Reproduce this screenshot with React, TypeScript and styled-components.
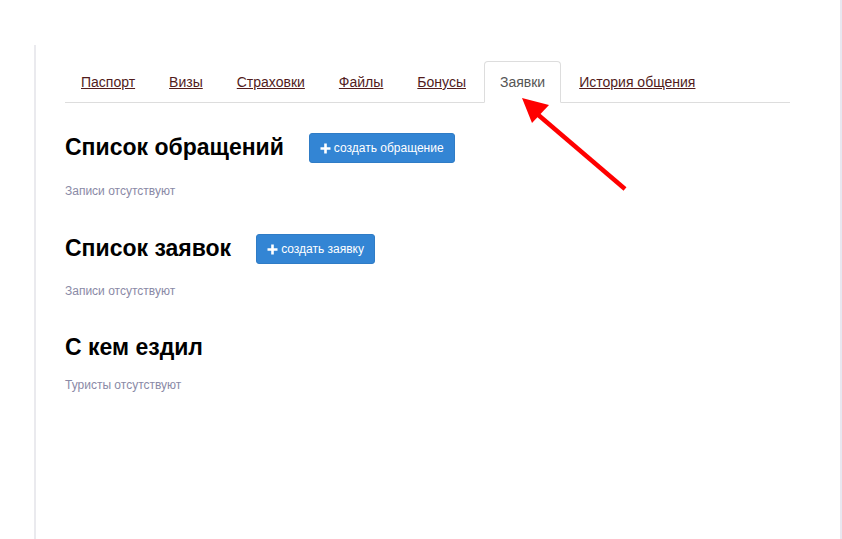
import React from "react";
import styled, { createGlobalStyle } from "styled-components";

const Global = createGlobalStyle`
  html, body { margin: 0; padding: 0; background: #fff; }
  body { font-family: "Liberation Sans", Arial, Helvetica, sans-serif; }
  * { box-sizing: border-box; }
`;

const Page = styled.div`
  position: relative;
  width: 842px;
  min-height: 539px;
  display: flex;
`;

const Main = styled.main`
  width: 842px;
  min-height: 539px;
  border-right: 2px solid #e8e8f0;
  padding: 45px 0 0 34px;
  display: flex;
`;

const Panel = styled.div`
  border-left: 2px solid #eaeaee;
  padding: 16px 0 0 29px;
  width: 756px;
`;

const Tabs = styled.ul`
  display: flex;
  margin: 0;
  padding: 0;
  list-style: none;
  border-bottom: 1px solid #ddd;
`;

const TabItem = styled.li`
  margin: 0 2px -1px 0;
`;

const TabLink = styled.a<{ $active?: boolean }>`
  display: block;
  padding: 10px 15px;
  font-size: 14px;
  line-height: 20px;
  border: 1px solid ${(p) => (p.$active ? "#ddd" : "transparent")};
  border-bottom-color: ${(p) => (p.$active ? "#fff" : "transparent")};
  border-radius: 4px 4px 0 0;
  background: ${(p) => (p.$active ? "#fff" : "transparent")};
  color: ${(p) => (p.$active ? "#555" : "#521c1c")};
  text-decoration: ${(p) => (p.$active ? "none" : "underline")};
  cursor: pointer;
`;

const Section = styled.section<{ $top: number }>`
  margin-top: ${(p) => p.$top}px;
`;

const HeadRow = styled.div`
  display: flex;
  align-items: center;
  gap: 25px;
  height: 30px;
`;

const Title = styled.h3`
  margin: 0;
  font-size: 23px;
  font-weight: bold;
  line-height: 1.1;
  color: #000;
`;

const AddButton = styled.button`
  display: inline-flex;
  align-items: center;
  gap: 3px;
  height: 30px;
  padding: 0 10px;
  font-family: inherit;
  font-size: 12px;
  color: #fff;
  background: #3385d4;
  border: 1px solid #2f7cc6;
  border-radius: 3px;
  cursor: pointer;
`;

const Empty = styled.p<{ $gap: number }>`
  margin: ${(p) => p.$gap}px 0 0;
  font-size: 12px;
  line-height: 17px;
  color: #8a8aa6;
`;

const Overlay = styled.svg`
  position: absolute;
  left: 0;
  top: 0;
  pointer-events: none;
`;

const Plus = () => (
  <svg width="11" height="11" viewBox="0 0 11 11">
    <path d="M5.5 0.5v10M0.5 5.5h10" stroke="#fff" strokeWidth="2.6" />
  </svg>
);

const tabs = ["Паспорт", "Визы", "Страховки", "Файлы", "Бонусы", "Заявки", "История общения"];

export default function App() {
  return (
    <>
      <Global />
      <Page>
        <Main>
          <Panel>
            <Tabs>
              {tabs.map((t) => (
                <TabItem key={t}>
                  <TabLink $active={t === "Заявки"}>{t}</TabLink>
                </TabItem>
              ))}
            </Tabs>

            <Section $top={30}>
              <HeadRow>
                <Title>Список обращений</Title>
                <AddButton>
                  <Plus /> создать обращение
                </AddButton>
              </HeadRow>
              <Empty $gap={20}>Записи отсутствуют</Empty>
            </Section>

            <Section $top={34}>
              <HeadRow>
                <Title>Список заявок</Title>
                <AddButton>
                  <Plus /> создать заявку
                </AddButton>
              </HeadRow>
              <Empty $gap={19}>Записи отсутствуют</Empty>
            </Section>

            <Section $top={33}>
              <HeadRow>
                <Title>С кем ездил</Title>
              </HeadRow>
              <Empty $gap={14}>Туристы отсутствуют</Empty>
            </Section>
          </Panel>
        </Main>
        <Overlay width="842" height="539" viewBox="0 0 842 539">
          <line x1="625" y1="189" x2="536" y2="113" stroke="#ff0000" strokeWidth="4.5" />
          <polygon points="522,98 532,123 549,105" fill="#ff0000" />
        </Overlay>
      </Page>
    </>
  );
}
